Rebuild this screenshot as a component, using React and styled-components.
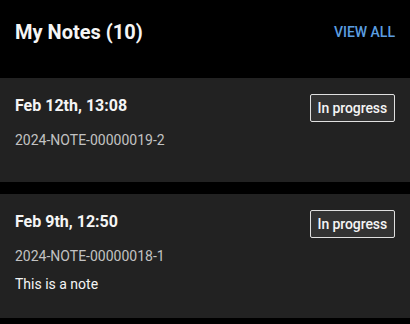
import React from "react";
import styled, { createGlobalStyle } from "styled-components";

const notes = [
  { date: "Feb 12th, 13:08", id: "2024-NOTE-00000019-2", status: "In progress", text: "" },
  { date: "Feb 9th, 12:50", id: "2024-NOTE-00000018-1", status: "In progress", text: "This is a note" },
];

function App() {
  return (
    <>
      <GlobalStyle />
      <Page>
        <Header>
          <Title>My Notes (10)</Title>
          <ViewAll href="#">VIEW ALL</ViewAll>
        </Header>
        <List>
          {notes.map((note) => (
            <Card key={note.id}>
              <CardTop>
                <DateText>{note.date}</DateText>
                <Badge>{note.status}</Badge>
              </CardTop>
              <NoteId>{note.id}</NoteId>
              <NoteText>{note.text}</NoteText>
            </Card>
          ))}
        </List>
      </Page>
    </>
  );
}

const GlobalStyle = createGlobalStyle`
  html, body {
    margin: 0;
    padding: 0;
    background: #000;
  }
  body {
    font-family: Roboto, "Liberation Sans", sans-serif;
    color: #f2f2f2;
  }
`;

const Page = styled.div`
  width: 410px;
  min-height: 324px;
  background: #000;
`;

const Header = styled.div`
  display: flex;
  justify-content: space-between;
  align-items: center;
  padding: 18px 15px 32px;
`;

const Title = styled.h2`
  margin: 0;
  font-size: 20px;
  line-height: 28px;
  font-weight: 700;
  color: #f5f5f5;
`;

const ViewAll = styled.a`
  font-size: 14px;
  font-weight: 500;
  line-height: 24px;
  color: #5b9ee0;
  text-decoration: none;
  text-transform: uppercase;
`;

const List = styled.div`
  display: flex;
  flex-direction: column;
  gap: 12px;
`;

const Card = styled.div`
  background: #222;
  padding: 16px 15px 24px;
`;

const CardTop = styled.div`
  display: flex;
  justify-content: space-between;
  align-items: flex-start;
`;

const DateText = styled.div`
  font-size: 16px;
  font-weight: 700;
  line-height: 24px;
  color: #f5f5f5;
`;

const Badge = styled.span`
  display: inline-flex;
  align-items: center;
  height: 28px;
  box-sizing: border-box;
  padding: 0 7px;
  border: 1px solid #e0e0e0;
  border-radius: 2px;
  background: #333;
  font-size: 14px;
  font-weight: 500;
  letter-spacing: -0.1px;
  color: #f5f5f5;
`;

const NoteId = styled.div`
  margin-top: 8px;
  font-size: 14px;
  line-height: 20px;
  color: #c2c2c2;
`;

const NoteText = styled.div`
  margin-top: 8px;
  font-size: 14px;
  line-height: 20px;
  color: #f5f5f5;
`;

export default App;
